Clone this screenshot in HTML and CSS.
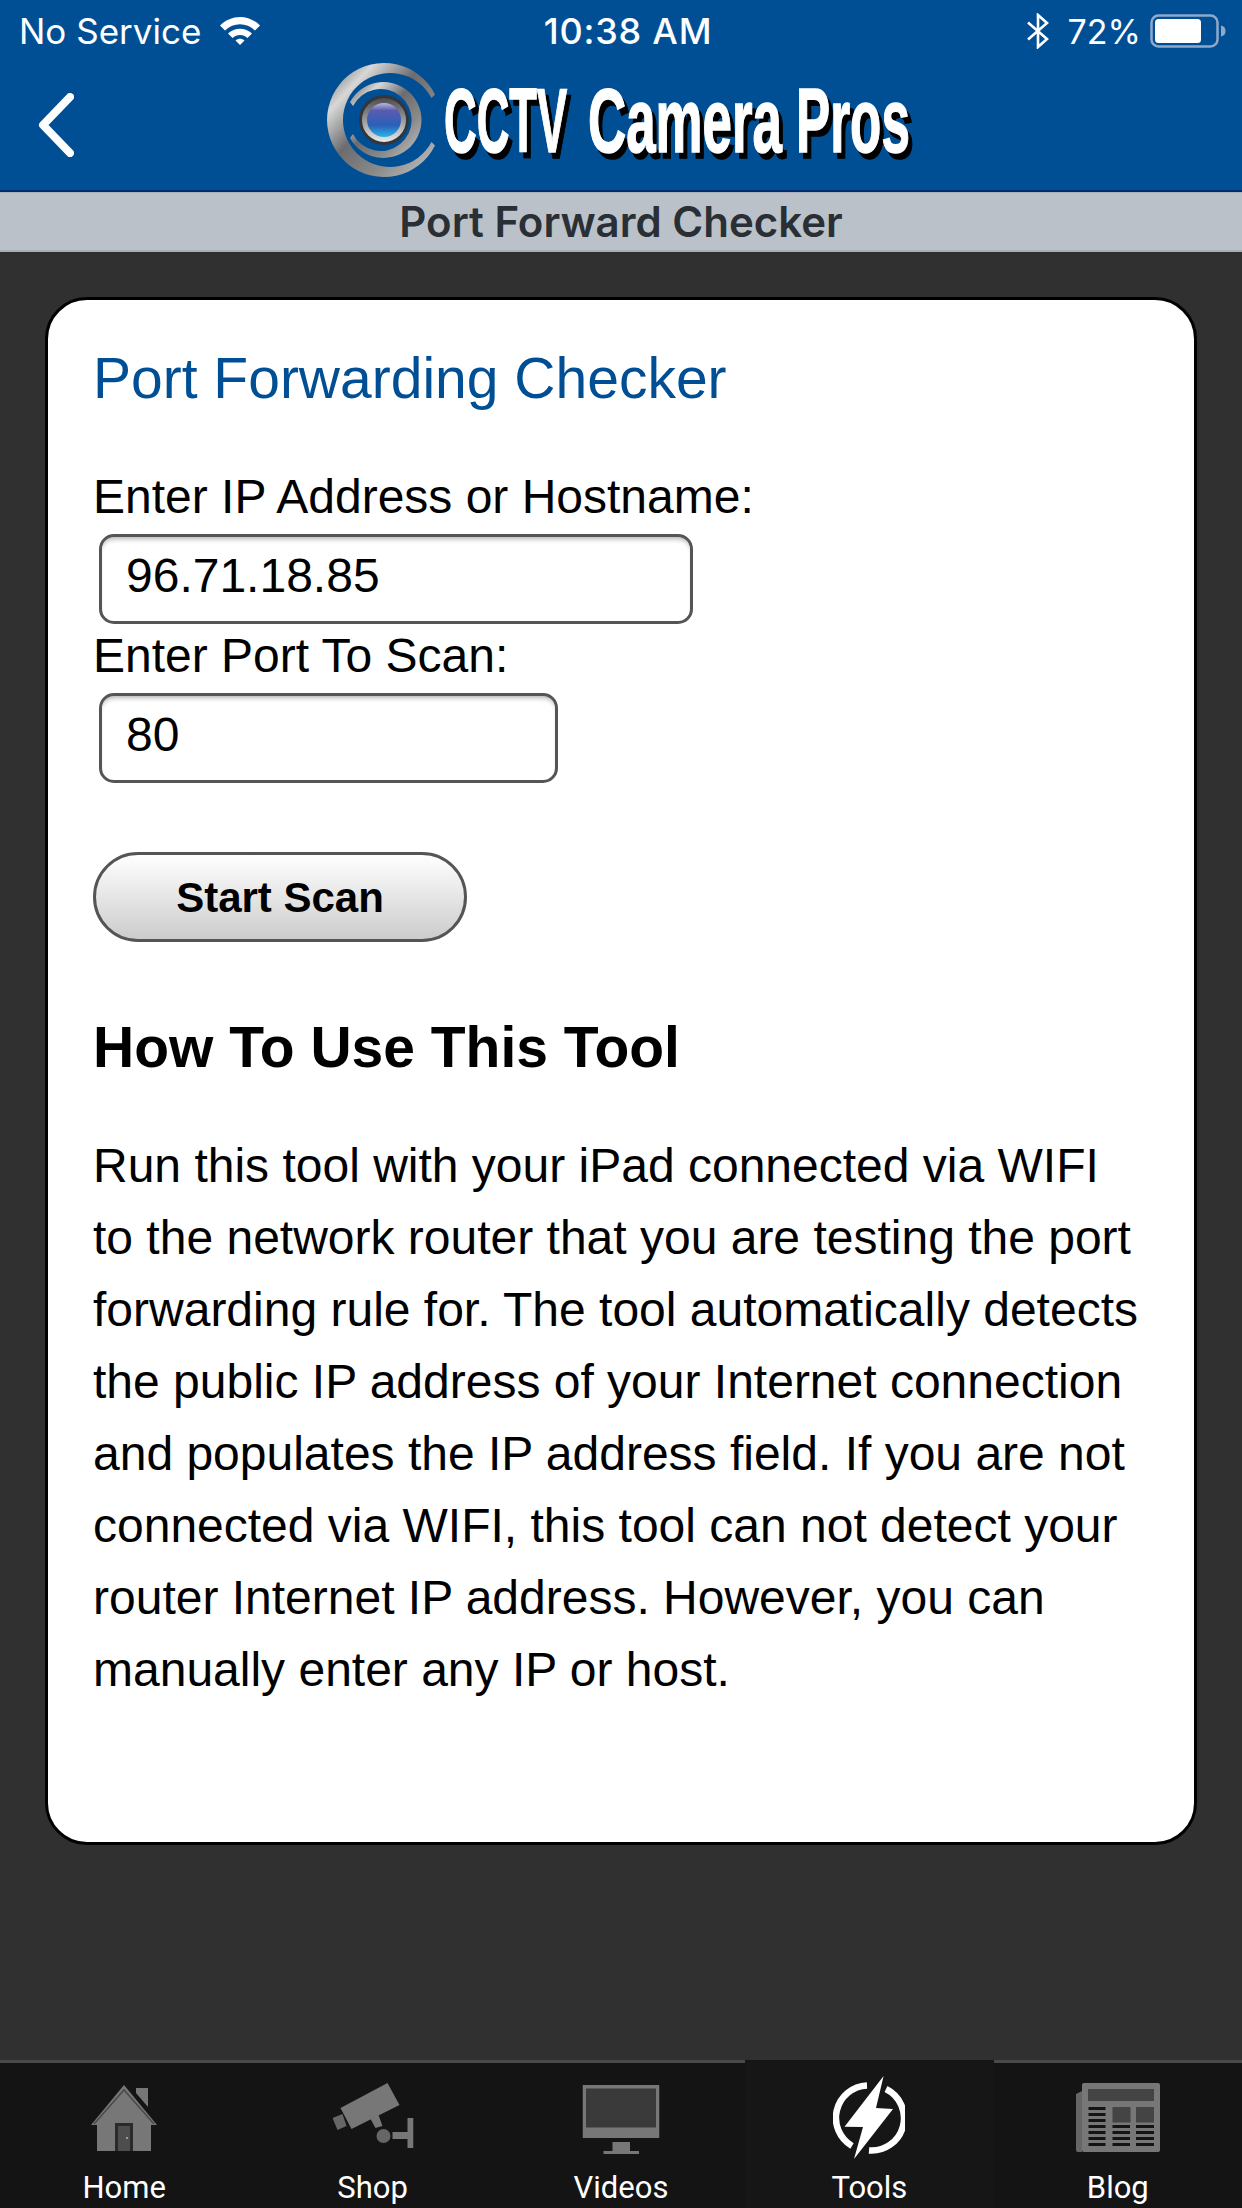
FILE: index.html
```html
<!DOCTYPE html>
<html lang="en">
<head>
<meta charset="utf-8">
<title>Port Forward Checker</title>
<link rel="stylesheet" href="styles.css">
</head>
<body>
<div class="app">
  <header class="top">
    <div class="status">
      <div class="status-left">
        <span>No Service</span>
        <svg class="wifi" viewBox="0 0 44 30" width="44" height="30">
          <path d="M2 10.500C13.500-1 30.500-1 42 10.500L37 15.500C28.500 7 15.500 7 7 15.500Z" fill="#fff"/>
          <path d="M10 18.500C16.500 12 27.500 12 34 18.500L29.500 23C25.500 19 18.500 19 14.500 23Z" fill="#fff"/>
          <path d="M17.500 25.500C20 23 24 23 26.500 25.500L22 30Z" fill="#fff"/>
        </svg>
      </div>
      <div class="status-time">10:38 AM</div>
      <div class="status-right">
        <svg class="bt" viewBox="0 0 24 36" width="24" height="36">
          <path d="M2 9.500L21 26L12 34V2L21 10L2 26.500" fill="none" stroke="#fff" stroke-width="2.600"/>
        </svg>
        <span class="pct">72%</span>
        <svg class="batt" viewBox="0 0 77 34" width="77" height="34">
          <rect x="1.500" y="1.500" width="66" height="31" rx="7" fill="none" stroke="#8fa9c9" stroke-width="2.500"/>
          <rect x="5" y="5" width="46" height="24" rx="3.500" fill="#fff"/>
          <path d="M71 11.500C74 12 75.500 14 75.500 17S74 22 71 22.500Z" fill="#8fa9c9"/>
        </svg>
      </div>
    </div>
    <div class="nav">
      <svg class="back" viewBox="0 0 36 64" width="36" height="64">
        <path d="M32 4L5 32L32 60" fill="none" stroke="#fff" stroke-width="8" stroke-linecap="round" stroke-linejoin="round"/>
      </svg>
      <svg class="logo" viewBox="320 60 622 130" width="622" height="130">
        <defs>
          <linearGradient id="metal" x1="0" y1="0" x2="1" y2="1">
            <stop offset="0" stop-color="#5a5a5e"/>
            <stop offset=".22" stop-color="#d8d8d8"/>
            <stop offset=".45" stop-color="#6c6c70"/>
            <stop offset=".7" stop-color="#8a8a8a"/>
            <stop offset="1" stop-color="#c8c8c8"/>
          </linearGradient>
          <linearGradient id="metal2" x1="0" y1="0" x2="0" y2="1">
            <stop offset="0" stop-color="#4c4c50"/>
            <stop offset="1" stop-color="#e8e8e8"/>
          </linearGradient>
          <linearGradient id="lens" x1="0" y1="0" x2="0" y2="1">
            <stop offset="0" stop-color="#b8b8d8"/>
            <stop offset=".22" stop-color="#5a5cb0"/>
            <stop offset=".65" stop-color="#2a5fb8"/>
            <stop offset="1" stop-color="#2cb4e8"/>
          </linearGradient>
        </defs>
        <path d="M435 94.500A57 57 0 1 0 435 145.500L431.500 142A47 47 0 1 1 431.500 98Z" fill="url(#metal)"/>
        <path d="M350 102A38 38 0 1 1 350 138L353 134A31 31 0 1 0 353 106Z" fill="url(#metal)"/>
        <circle cx="384" cy="120" r="25" fill="#33353b"/>
        <circle cx="384" cy="120" r="22" fill="url(#metal2)"/>
        <circle cx="384" cy="120" r="17" fill="url(#lens)"/>
        <g class="logo-words">
          <text class="logo-text" transform="translate(444 152) scale(.497 1)">CCTV</text>
          <text class="logo-text" transform="translate(588 152) scale(.581 1)">Camera</text>
          <text class="logo-text" transform="translate(796 152) scale(.563 1)">Pros</text>
        </g>
      </svg>
    </div>
  </header>
  <div class="subbar">Port Forward Checker</div>
  <main class="content">
    <section class="card">
      <h1 class="title">Port Forwarding Checker</h1>
      <div class="label">Enter IP Address or Hostname:</div>
      <div class="field field-wide">96.71.18.85</div>
      <div class="label">Enter Port To Scan:</div>
      <div class="field field-short">80</div>
      <div class="btn">Start Scan</div>
      <h2 class="howto">How To Use This Tool</h2>
      <p class="body">Run this tool with your iPad connected via WIFI to the network router that you are testing the port forwarding rule for. The tool automatically detects the public IP address of your Internet connection and populates the IP address field. If you are not connected via WIFI, this tool can not detect your router Internet IP address. However, you can manually enter any IP or host.</p>
    </section>
  </main>
  <nav class="tabs">
    <div class="tab">
      <svg class="ico ico-low" viewBox="0 0 66 66" width="66" height="66">
        <path d="M33 0L66 40H60V66H6V40H0ZM45 3H57V22L45 8Z" fill="#777"/>
        <path d="M3 39L33 5L63 39" fill="none" stroke="#4a4a4a" stroke-width="1.500"/>
        <rect x="24" y="38" width="18" height="28" fill="#2a2a2a"/>
        <rect x="27" y="41" width="12" height="25" fill="#4d4d4d"/>
        <rect x="35" y="52" width="2" height="2" fill="#999"/>
      </svg>
      <span>Home</span>
    </div>
    <div class="tab">
      <svg class="ico" viewBox="0 0 81 66" width="81" height="66">
        <path d="M8 25L55 0L67 22L19 46Z" fill="#777"/>
        <path d="M0 35L10 31L14 43L5 47Z" fill="#666"/>
        <path d="M38 36L46 32L50 43L43 45Z" fill="#777"/>
        <circle cx="51" cy="53" r="7" fill="#666"/>
        <rect x="60" y="49" width="16" height="7" fill="#777"/>
        <rect x="75" y="35" width="6" height="30" fill="#777"/>
      </svg>
      <span>Shop</span>
    </div>
    <div class="tab">
      <svg class="ico ico-low" viewBox="0 0 77 69" width="77" height="69">
        <rect width="77" height="53" fill="#777"/>
        <rect x="3.500" y="3.500" width="70" height="39" fill="#3a3a3a"/>
        <rect x="30" y="57" width="17.500" height="9" fill="#777"/>
        <rect x="21" y="66" width="35.500" height="3" fill="#777"/>
      </svg>
      <span>Videos</span>
    </div>
    <div class="tab tab-active">
      <svg class="ico" viewBox="0 0 72 83" width="72" height="83">
        <path d="M50.600 0L43 32L60 33L21 83L30 51L11.500 50.700Z" fill="#fff"/>
        <path d="M34 9.500A32.500 32.500 0 0 0 19 70" fill="none" stroke="#fff" stroke-width="6.500"/>
        <path d="M53 13A32.500 32.500 0 0 1 36 74.500" fill="none" stroke="#fff" stroke-width="6.500"/>
      </svg>
      <span>Tools</span>
    </div>
    <div class="tab">
      <svg class="ico" viewBox="0 0 84 69" width="84" height="69">
        <path d="M0 11L6 8V69H2Q0 69 0 67Z" fill="#666"/>
        <rect x="6" width="78" height="69" rx="2" fill="#777"/>
        <rect x="12" y="6" width="66" height="12" fill="#444"/>
        <rect x="36.500" y="24" width="18" height="15.500" fill="#444"/>
        <rect x="60" y="24" width="18" height="15.500" fill="#444"/>
        <path d="M12.500 25.500H29.500M12.500 31.500H29.500M12.500 37.500H29.500M12.500 43.500H29.500M12.500 49.500H29.500M12.500 55.500H29.500M12.500 61.500H29.500M36.500 43.500H54M36.500 49.500H54M36.500 55.500H54M36.500 61.500H54M60 43.500H78M60 49.500H78M60 55.500H78M60 61.500H78" stroke="#141414" stroke-width="3.200"/>
      </svg>
      <span>Blog</span>
    </div>
  </nav>
</div>
</body>
</html>
```
FILE: styles.css
```css
* { box-sizing: border-box; }
html, body { margin: 0; padding: 0; }
body { background: #303030; font-family: "Liberation Sans", Arial, sans-serif; }
.app { width: 1242px; height: 2208px; display: flex; flex-direction: column; overflow: hidden; }

.top { background: #004f95; height: 192px; border-bottom: 2px solid #002c6e; color: #fff; font-family: Inter, "Noto Sans", sans-serif; }
.status { height: 62px; display: grid; grid-template-columns: 1fr 1fr 1fr; align-items: center; font-size: 35px; padding: 0 15px 0 19px; }
.status-left { display: flex; align-items: center; gap: 17px; }
.wifi { margin-top: -2px; }
.status-time { text-align: center; font-size: 36px; font-weight: 500; letter-spacing: 0.8px; margin-left: 10px; }
.status-right { display: flex; align-items: center; justify-content: flex-end; }
.bt { margin-right: 18px; }
.pct { margin-right: 9px; font-size: 34px; }
.nav { height: 128px; display: grid; grid-template-columns: 320px 622px; align-items: start; margin-top: -2px; }
.back { margin: 33px 0 0 38px; }
.logo { display: block; overflow: visible; }
.logo-words { filter: drop-shadow(4px 6px 0 #000); }
.logo-text { font-family: "Liberation Sans", sans-serif; font-weight: 700; font-size: 91px; fill: #fff; stroke: #fff; stroke-width: 1.5px; }

.subbar { height: 60px; background: #bbc1c9; border-bottom: 2px solid #a9aeb5; border-top: 1px solid #a9b0ba; color: #2a2f36; font-family: Inter, "Noto Sans", sans-serif; font-weight: 600; font-size: 42px; line-height: 58px; text-align: center; }

.content { flex: 1; padding: 45px 45px 0; background: #303030; }
.card { background: #fff; border: 3px solid #000; border-radius: 42px; height: 1548px; padding: 47px 50px 0 45px; color: #000; }
.title { margin: 0 0 59px; font-weight: 400; font-size: 57px; line-height: 62px; color: #004f95; }
.label { font-size: 48px; line-height: 58px; }
.field { margin: 8px 0 0 6px; height: 90px; border: 3px solid #555; border-radius: 15px; font-size: 48px; line-height: 77px; padding-left: 24px; box-shadow: inset 0 5px 5px -3px rgba(0,0,0,.3); background: #fff; }
.field + .label { margin-top: 3px; }
.field-wide { width: 594px; }
.field-short { width: 459px; }
.btn { margin: 69px 0 0; width: 374px; height: 90px; border: 3px solid #555; border-radius: 45px; background: linear-gradient(#fff, #ccc); font-weight: 700; font-size: 42px; line-height: 85px; text-align: center; }
.howto { margin: 74px 0 0; font-size: 57px; line-height: 63px; font-weight: 700; }
.body { margin: 51px 0 0; font-size: 48px; line-height: 72px; }

.tabs { height: 148px; background: #141414; border-top: 3px solid #4a4a4a; display: grid; grid-template-columns: repeat(5, 1fr); font-family: Roboto, Inter, sans-serif; color: #fff; font-size: 31px; }
.tab { position: relative; height: 145px; display: flex; flex-direction: column; align-items: center; justify-content: flex-end; padding-bottom: 2px; }
.ico { position: absolute; top: 20px; left: 50%; transform: translateX(-50%); }
.ico-low { top: 22px; }
.tab-active { background: #161616; margin-top: -3px; height: 148px; }
.tab-active .ico { top: 16px; }
```
